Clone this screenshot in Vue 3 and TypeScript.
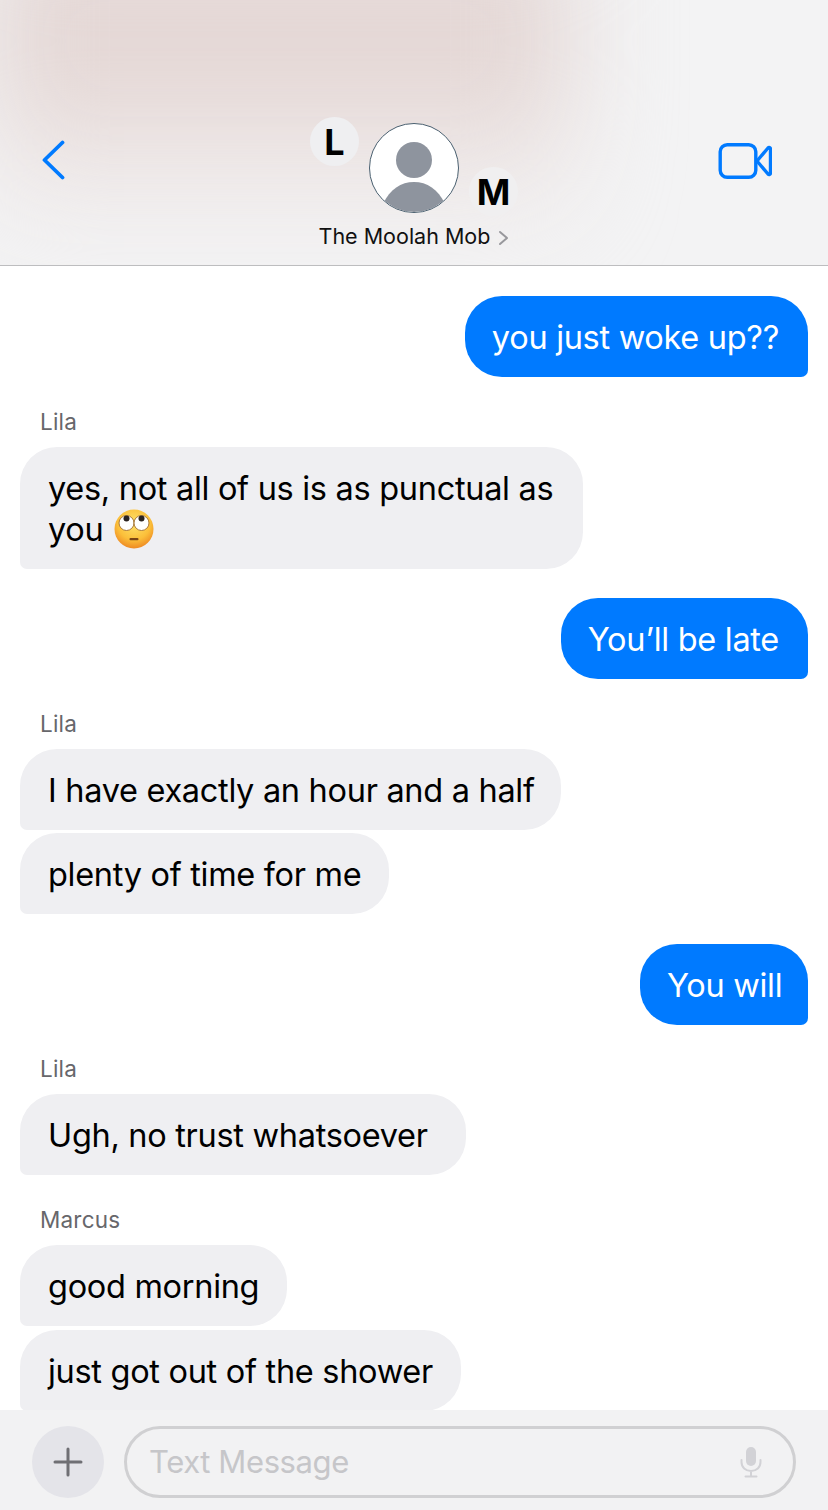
<script setup lang="ts">
type Msg = { id: number, from: 'me' | 'them', text: string, name?: string, emoji?: boolean, gap?: number, width?: number }

const messages: Msg[] = [
  { id: 1, from: 'me', text: 'you just woke up??' },
  { id: 2, from: 'them', name: 'Lila', text: 'yes, not all of us is as punctual as\nyou', emoji: true, width: 563 },
  { id: 3, from: 'me', text: 'You’ll be late' },
  { id: 4, from: 'them', name: 'Lila', text: 'I have exactly an hour and a half', width: 541 },
  { id: 5, from: 'them', text: 'plenty of time for me', gap: 3 },
  { id: 6, from: 'me', text: 'You will', gap: 30, width: 168 },
  { id: 7, from: 'them', name: 'Lila', text: 'Ugh, no trust whatsoever', gap: 31, width: 446 },
  { id: 8, from: 'them', name: 'Marcus', text: 'good morning' },
  { id: 9, from: 'them', text: 'just got out of the shower', gap: 4 },
]
</script>

<template>
  <div class="phone">
    <header class="header">
      <svg class="back" width="24" height="40" viewBox="0 0 24 40">
        <path d="M21.500 2.500 3.500 20l18 17.500" fill="none" stroke="#007aff" stroke-width="3.800" stroke-linecap="round" stroke-linejoin="round" />
      </svg>
      <div class="group">
        <div class="avatars">
          <span class="mini mini-l">L</span>
          <div class="avatar">
            <svg width="88" height="88" viewBox="0 0 88 88">
              <circle cx="44" cy="36" r="18" fill="#8e949e" />
              <path d="M13 80C20 65 31 58 44 58s24 7 31 22c-8 5-19 8-31 8s-23-3-31-8Z" fill="#8e949e" />
            </svg>
          </div>
          <span class="mini mini-m">M</span>
        </div>
        <div class="title">The Moolah Mob
          <svg width="11" height="16" viewBox="0 0 11 16">
            <path d="M2 2l7 6-7 6" fill="none" stroke="#98989c" stroke-width="2" stroke-linecap="round" stroke-linejoin="round" />
          </svg>
        </div>
      </div>
      <svg class="video" width="54" height="36" viewBox="0 0 54 36">
        <rect x="2.200" y="1.700" width="35.600" height="32.600" rx="7" fill="none" stroke="#007aff" stroke-width="3.400" />
        <path d="M39 18 50 5c1-1 2.500-.5 2.500 1v24c0 1.500-1.500 2-2.500 1Z" fill="none" stroke="#007aff" stroke-width="3.400" stroke-linejoin="round" />
      </svg>
    </header>

    <main class="thread">
      <div
        v-for="m in messages"
        :key="m.id"
        class="row"
        :class="[m.from, { named: m.name }]"
        :style="m.gap ? { marginTop: `${m.gap}px` } : undefined"
      >
        <div v-if="m.name" class="name">{{ m.name }}</div>
        <div class="bubble" :style="m.width ? { width: `${m.width}px` } : undefined">
          <span class="text">{{ m.text }}</span>
          <svg v-if="m.emoji" class="emoji" width="40" height="40" viewBox="0 0 40 40">
            <defs>
              <radialGradient id="face" cx="50%" cy="35%" r="65%">
                <stop offset="0" stop-color="#fde36a" />
                <stop offset="0.65" stop-color="#fbbf3a" />
                <stop offset="1" stop-color="#ee8a24" />
              </radialGradient>
            </defs>
            <circle cx="20" cy="20" r="19.500" fill="url(#face)" />
            <circle cx="12.500" cy="14" r="7.500" fill="#fff" stroke="#a9793a" stroke-width="1" />
            <circle cx="27.500" cy="14" r="7.500" fill="#fff" stroke="#a9793a" stroke-width="1" />
            <circle cx="12.500" cy="9.500" r="3" fill="#2a2320" />
            <circle cx="27.500" cy="9.500" r="3" fill="#2a2320" />
            <rect x="15.500" y="29" width="9" height="2.200" rx="1" fill="#7a4413" />
          </svg>
        </div>
      </div>
    </main>

    <footer class="composer">
      <div class="plus">
        <svg width="30" height="30" viewBox="0 0 30 30">
          <path d="M15 2v26M2 15h26" stroke="#6f6f74" stroke-width="3" stroke-linecap="round" />
        </svg>
      </div>
      <div class="input">
        <span class="placeholder">Text Message</span>
        <svg width="22" height="32" viewBox="0 0 22 32">
          <rect x="6" y="1" width="10" height="19" rx="5" fill="#d2d2d6" />
          <path d="M1.500 14v2c0 5.500 4 9 9.500 9s9.500-3.500 9.500-9v-2M11 25v5M5.500 30.500h11" fill="none" stroke="#d2d2d6" stroke-width="2" stroke-linecap="round" />
        </svg>
      </div>
    </footer>
  </div>
</template>

<style scoped>
.phone {
  width: 828px;
  height: 1510px;
  display: flex;
  flex-direction: column;
  overflow: hidden;
  background: #fff;
  font-family: Inter, "Liberation Sans", sans-serif;
  color: #000;
}

.header {
  height: 265px;
  flex: none;
  border-bottom: 1px solid #bdbdbf;
  display: flex;
  justify-content: space-between;
  padding: 0 56px 0 41px;
  position: relative;
  overflow: hidden;
  background: #f3f3f4;
}

/* the blurred wallpaper showing through the bar */
.header::before {
  content: "";
  position: absolute;
  left: -10px;
  top: -70px;
  width: 580px;
  height: 310px;
  background: linear-gradient(180deg, #e4d7d5 0%, #e4d7d5 50%, rgba(236, 228, 227, 0.8) 72%, rgba(243, 243, 244, 0) 100%);
  filter: blur(50px);
}

.back,
.video {
  position: relative;
  z-index: 1;
}

.back {
  margin-top: 140px;
}

.video {
  margin-top: 143px;
}

.group {
  position: absolute;
  z-index: 1;
  left: 304px;
  top: 116px;
  width: 220px;
  display: flex;
  flex-direction: column;
  align-items: center;
}

.avatars {
  width: 220px;
  height: 98px;
  position: relative;
}

.avatar {
  position: absolute;
  left: 65px;
  top: 7px;
  width: 90px;
  height: 90px;
  box-sizing: border-box;
  border: 1px solid #4a6070;
  border-radius: 50%;
  background: #fff;
  overflow: hidden;
}

.avatar svg {
  display: block;
}

.mini {
  position: absolute;
  width: 49px;
  height: 49px;
  border-radius: 50%;
  display: flex;
  align-items: center;
  justify-content: center;
  font-size: 36px;
  font-weight: 700;
  line-height: 1;
}

.mini-l {
  left: 6px;
  top: 1px;
  background: #efeff1;
}

.mini-m {
  left: 165px;
  top: 51px;
  background: #f0eff0;
}

.title {
  margin-top: 9px;
  font-size: 21.500px;
  line-height: 26px;
  color: #111;
  white-space: nowrap;
}

.title svg {
  margin-left: 2px;
  vertical-align: -2px;
}

.thread {
  flex: 1;
  min-height: 0;
  padding: 30px 20px 0;
}

.row {
  display: flex;
  flex-direction: column;
  margin-top: 29px;
}

.row:first-child {
  margin-top: 0;
}

.row.named {
  margin-top: 32px;
}

.me {
  align-items: flex-end;
}

.them {
  align-items: flex-start;
}

.name {
  margin-left: 20px;
  margin-bottom: 12px;
  font-size: 22.500px;
  line-height: 26px;
  letter-spacing: 0.2px;
  color: #67676b;
}

.bubble {
  box-sizing: border-box;
  padding: 21px 28px 19px 28px;
  font-size: 32.500px;
  line-height: 41px;
  letter-spacing: -0.3px;
  border-radius: 37px;
}

.text {
  white-space: pre;
}

.me .bubble {
  background: #007aff;
  color: #fff;
  padding-left: 27px;
  padding-right: 29px;
  border-bottom-right-radius: 7px;
}

.them .bubble {
  background: #efeff2;
  border-bottom-left-radius: 7px;
}

.emoji {
  margin: -10px 0 -10px 11px;
  vertical-align: 2px;
}

.composer {
  height: 100px;
  flex: none;
  box-sizing: border-box;
  display: flex;
  align-items: center;
  gap: 20px;
  padding: 3px 32px 0;
  background: #f2f2f3;
  position: relative;
}

.plus {
  width: 72px;
  height: 72px;
  flex: none;
  border-radius: 50%;
  background: #e4e4e9;
  display: flex;
  align-items: center;
  justify-content: center;
}

.input {
  flex: 1;
  height: 72px;
  box-sizing: border-box;
  border: 3px solid #d0d0d2;
  border-radius: 36px;
  display: flex;
  align-items: center;
  justify-content: space-between;
  padding: 0 31px 0 22px;
}

.placeholder {
  font-size: 31px;
  letter-spacing: -0.4px;
  color: #c6c6c9;
}
</style>

<style>
body {
  background: #fff;
}
</style>
